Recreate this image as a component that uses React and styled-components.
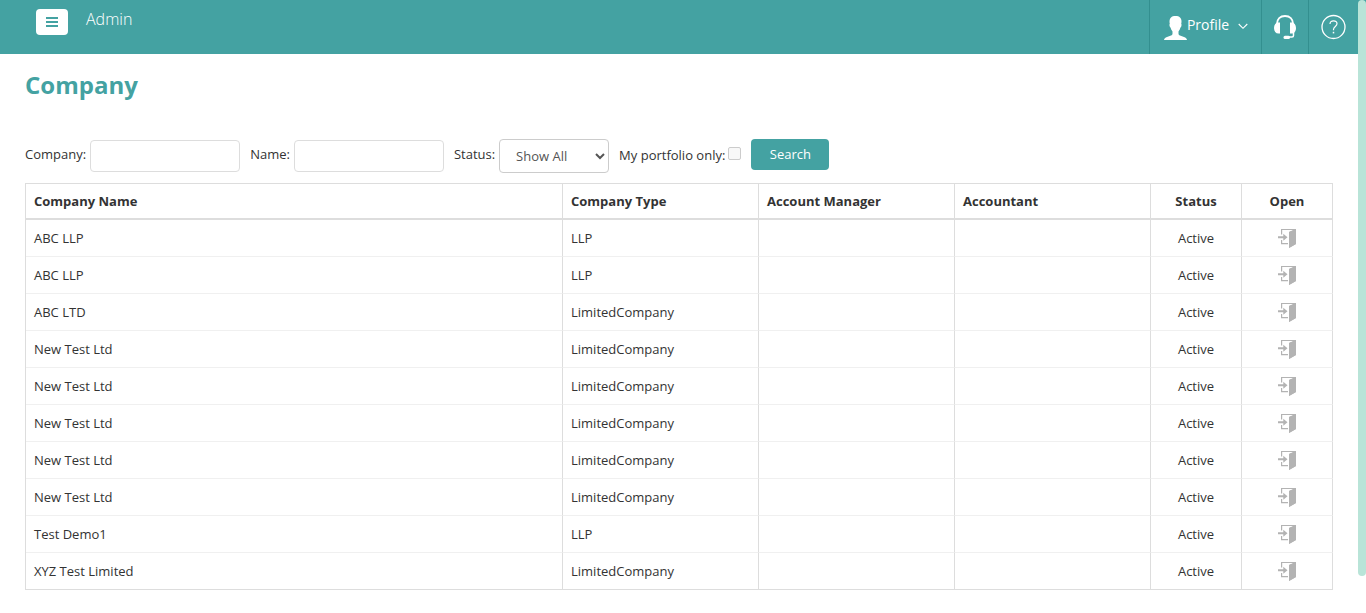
import React, { useState } from "react";
import styled, { createGlobalStyle } from "styled-components";

const teal = "#44a2a2";
const line = "#dddddd";

const GlobalStyle = createGlobalStyle`
  *, *::before, *::after { box-sizing: border-box; }
  html, body { margin: 0; height: 100%; overflow: hidden; }
  body {
    background: #ffffff;
    color: #333333;
    font: 13px/20px "Open Sans", "Noto Sans", sans-serif;
  }
`;

const Shell = styled.div`
  display: flex;
  height: 100vh;
`;

const Page = styled.div`
  flex: 1;
  min-width: 0;
  overflow: hidden;
`;

const ScrollTrack = styled.div`
  flex: none;
  width: 8px;
  background: linear-gradient(${teal} 54px, #ffffff 54px);
`;

const ScrollThumb = styled.div`
  height: 94%;
  border-radius: 4px;
  background: #b9e4d8;
`;

const TopBar = styled.header`
  display: flex;
  align-items: flex-start;
  height: 54px;
  padding-left: 36px;
  background: ${teal};
  color: #ffffff;
`;

const MenuButton = styled.button`
  display: flex;
  align-items: center;
  justify-content: center;
  width: 32px;
  height: 26px;
  margin: 9px 18px 0 0;
  padding: 0;
  border: 0;
  border-radius: 4px;
  background: #ffffff;
  color: ${teal};
`;

const AppName = styled.span`
  margin-top: 7px;
  font-size: 16px;
  line-height: 24px;
  font-weight: 300;
`;

const Actions = styled.nav`
  display: flex;
  align-self: stretch;
  margin-left: auto;
`;

const ActionButton = styled.button`
  display: flex;
  align-items: center;
  justify-content: center;
  width: ${(p) => p.$width}px;
  padding: 0;
  border: 0;
  border-left: 1px solid #338f8f;
  background: transparent;
  color: inherit;
  font: inherit;
`;

const ProfileLabel = styled.span`
  margin: 0 9px 4px 0;
  font-size: 14px;
`;

const Content = styled.main`
  padding: 15px 25px 24px;
`;

const Title = styled.h1`
  margin: 0 0 38px;
  color: ${teal};
  font-size: 24px;
  line-height: 32px;
  font-weight: 700;
`;

const Filters = styled.form`
  display: flex;
  align-items: center;
  gap: 10px;
  height: 34px;
  margin-bottom: 10px;
`;

const Field = styled.label`
  display: flex;
  align-items: center;
  gap: ${(p) => (p.$tight ? 3 : 4)}px;
  white-space: nowrap;
`;

const FieldText = styled.span`
  padding-bottom: ${(p) => (p.$tight ? 2 : 4)}px;
`;

const TextInput = styled.input`
  width: 150px;
  height: 32px;
  padding: 4px 8px;
  border: 1px solid ${line};
  border-radius: 4px;
  background: #ffffff;
  color: #555555;
  font: inherit;
`;

const Select = styled.select`
  width: 110px;
  height: 34px;
  padding: 6px 0 6px 12px;
  border: 1px solid #cccccc;
  border-radius: 4px;
  background-color: #ffffff;
  color: #555555;
  font: inherit;
`;

const Checkbox = styled.input`
  appearance: none;
  width: 13px;
  height: 13px;
  margin: 0 0 5px;
  border: 1px solid #cccccc;
  border-radius: 2px;
  background: #f8f8f8;

  &:checked { background: ${teal}; }
`;

const SearchButton = styled.button`
  width: 78px;
  height: 31px;
  margin-bottom: 3px;
  padding: 0 0 1px;
  border: 0;
  border-radius: 4px;
  background: ${teal};
  color: #ffffff;
  font: inherit;
`;

const Table = styled.table`
  width: 100%;
  table-layout: fixed;
  border-collapse: separate;
  border-spacing: 0;
  border-top: 1px solid ${line};
  border-left: 1px solid ${line};
`;

const Column = styled.col`
  width: ${(p) => (p.$width ? `${p.$width}px` : "auto")};
`;

const HeadCell = styled.th`
  height: 36px;
  padding: 0 8px;
  border-right: 1px solid ${line};
  border-bottom: 2px solid ${line};
  text-align: ${(p) => (p.$center ? "center" : "left")};
  font-weight: 700;
`;

const Cell = styled.td`
  height: 37px;
  padding: 0 8px;
  border-right: 1px solid ${line};
  border-bottom: 1px solid #f0f0f0;
  text-align: ${(p) => (p.$center ? "center" : "left")};

  tr:last-child > & { border-bottom-color: ${line}; }
`;

const OpenLink = styled.a`
  display: flex;
  justify-content: center;
  color: #b3b3b3;
`;

const MenuIcon = () => (
  <svg width="12" height="10" viewBox="0 0 12 10" fill="currentColor" aria-hidden="true">
    <path d="M0 0h12v2H0zM0 4h12v2H0zM0 8h12v2H0z" />
  </svg>
);

const UserIcon = () => (
  <svg width="24" height="26" viewBox="0 0 24 26" fill="currentColor" aria-hidden="true">
    <path d="M12.500 2C8.500 2 6.500 4 6.500 7.500c0 1 .1 1.800.3 2.500-.5.300-.4 1.300-.1 2.200.2.800.5 1.200.9 1.300.4 1.700 1 2.900 1.900 3.900v2c0 1-.5 1.600-1.500 2L4 23c-1.800.7-2.800 1.500-3 3h23c-.2-1.500-1.200-2.300-3-3l-4-1.600c-1-.4-1.500-1-1.500-2v-2c.9-1 1.500-2.200 1.900-3.900.4-.1.700-.5.900-1.300.3-.9.400-1.900-.1-2.200.2-.7.300-1.500.3-2.500C18.500 4 16.500 2 12.500 2z" />
  </svg>
);

const ChevronIcon = () => (
  <svg width="10" height="8" viewBox="0 0 10 8" fill="none" stroke="currentColor" aria-hidden="true">
    <path d="M.700 1L5 5.300 9.300 1" strokeWidth="1.100" />
  </svg>
);

const HeadsetIcon = () => (
  <svg width="24" height="26" viewBox="0 0 24 26" fill="none" aria-hidden="true">
    <path d="M4 10C4 5 7.300 2 12 2s8 3 8 8" stroke="currentColor" strokeWidth="2" />
    <path d="M20.500 18v3.500c0 1-.5 1.500-1.500 1.500h-4" stroke="currentColor" strokeWidth="1.500" />
    <path d="M7 8.500v11H5.500c-2.700 0-4.500-2-4.500-5.500s1.800-5.500 4.500-5.500zM17 8.500v11h1.500c2.700 0 4.500-2 4.500-5.500s-1.800-5.500-4.500-5.500z" fill="currentColor" />
    <rect x="10.500" y="21.700" width="6.500" height="3.300" rx="1.500" fill="currentColor" />
  </svg>
);

const HelpIcon = () => (
  <svg width="26" height="26" viewBox="0 0 26 26" fill="none" stroke="currentColor" aria-hidden="true">
    <circle cx="12.500" cy="13" r="11.500" strokeWidth="1.300" />
    <path d="M9 10C9 8 10.400 6.800 12.500 6.800S16 8 16 9.700c0 2.600-3.500 2.900-3.500 5.800v.8" strokeWidth="1.200" />
    <path d="M12.500 17.800v1.600" strokeWidth="1.500" />
  </svg>
);

const DoorIcon = () => (
  <svg width="18" height="20" viewBox="0 0 18 20" fill="currentColor" aria-hidden="true">
    <path d="M3 1h15v15l-7 4V4l4.500-2H4.200v4.500H3z" />
    <path d="M11 4l7-3v15l-7 4z" />
    <path d="M3 12h1.200v3H10v1.200H3z" />
    <path d="M0 8.300h5.300V5.800L9.500 9.300l-4.200 3.500v-2.500H0z" />
  </svg>
);

const columns = [
  { label: "Company Name" },
  { label: "Company Type", width: 196 },
  { label: "Account Manager", width: 196 },
  { label: "Accountant", width: 196 },
  { label: "Status", width: 91, center: true },
  { label: "Open", width: 91, center: true },
];

const companies = [
  ["ABC LLP", "LLP"],
  ["ABC LLP", "LLP"],
  ["ABC LTD", "LimitedCompany"],
  ["New Test Ltd", "LimitedCompany"],
  ["New Test Ltd", "LimitedCompany"],
  ["New Test Ltd", "LimitedCompany"],
  ["New Test Ltd", "LimitedCompany"],
  ["New Test Ltd", "LimitedCompany"],
  ["Test Demo1", "LLP"],
  ["XYZ Test Limited", "LimitedCompany"],
];

export default function App() {
  const [portfolioOnly, setPortfolioOnly] = useState(false);

  return (
    <Shell>
      <GlobalStyle />
      <Page>
        <TopBar>
          <MenuButton type="button" aria-label="Menu"><MenuIcon /></MenuButton>
          <AppName>Admin</AppName>
          <Actions>
            <ActionButton type="button" $width={112}>
              <UserIcon />
              <ProfileLabel>Profile</ProfileLabel>
              <ChevronIcon />
            </ActionButton>
            <ActionButton type="button" aria-label="Support" $width={47}><HeadsetIcon /></ActionButton>
            <ActionButton type="button" aria-label="Help" $width={50}><HelpIcon /></ActionButton>
          </Actions>
        </TopBar>
        <Content>
          <Title>Company</Title>
          <Filters onSubmit={(e) => e.preventDefault()}>
            <Field htmlFor="company">
              <FieldText>Company:</FieldText>
              <TextInput id="company" type="text" />
            </Field>
            <Field htmlFor="name">
              <FieldText>Name:</FieldText>
              <TextInput id="name" type="text" />
            </Field>
            <Field htmlFor="status">
              <FieldText>Status:</FieldText>
              <Select id="status" defaultValue="all">
                <option value="all">Show All</option>
              </Select>
            </Field>
            <Field htmlFor="portfolio" $tight>
              <FieldText $tight>My portfolio only:</FieldText>
              <Checkbox
                id="portfolio"
                type="checkbox"
                checked={portfolioOnly}
                onChange={(e) => setPortfolioOnly(e.target.checked)}
              />
            </Field>
            <SearchButton type="submit">Search</SearchButton>
          </Filters>
          <Table>
            <colgroup>
              {columns.map((c) => <Column key={c.label} $width={c.width} />)}
            </colgroup>
            <thead>
              <tr>
                {columns.map((c) => (
                  <HeadCell key={c.label} scope="col" $center={c.center}>{c.label}</HeadCell>
                ))}
              </tr>
            </thead>
            <tbody>
              {companies.map(([name, type], i) => (
                <tr key={i}>
                  <Cell>{name}</Cell>
                  <Cell>{type}</Cell>
                  <Cell />
                  <Cell />
                  <Cell $center>Active</Cell>
                  <Cell $center>
                    <OpenLink href="#open" aria-label={`Open ${name}`}><DoorIcon /></OpenLink>
                  </Cell>
                </tr>
              ))}
            </tbody>
          </Table>
        </Content>
      </Page>
      <ScrollTrack aria-hidden="true"><ScrollThumb /></ScrollTrack>
    </Shell>
  );
}
